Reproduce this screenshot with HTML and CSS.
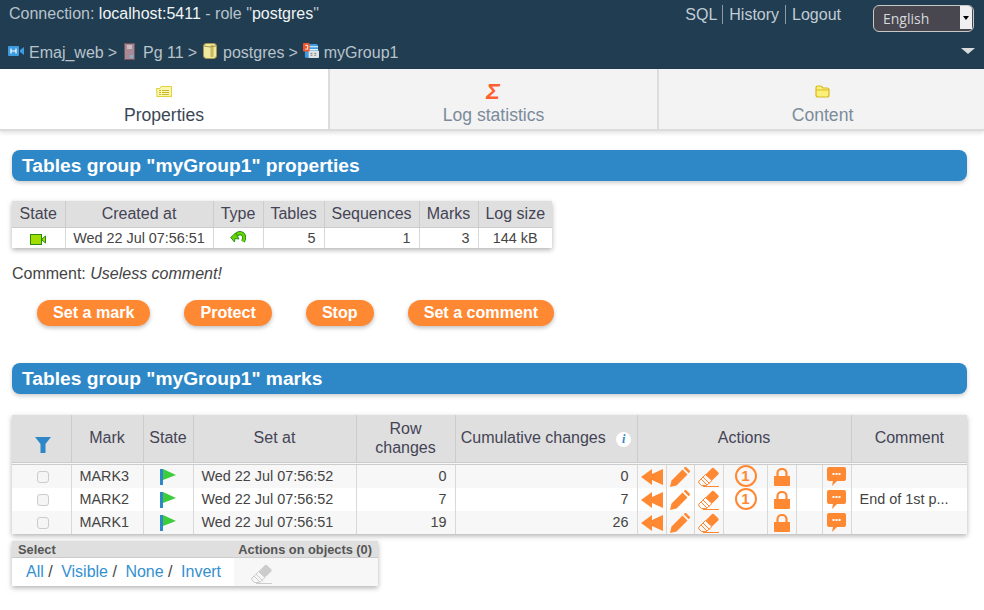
FILE: index.html
```html
<!DOCTYPE html>
<html lang="en">
<head>
  <meta charset="UTF-8">
  <title>Emaj_web - myGroup1</title>
  <link rel="stylesheet" href="styles.css">
</head>
<body>
  <svg class="defs" width="0" height="0">
    <symbol id="rewind" viewBox="0 0 22 16"><path d="M0 8 11 0v5L22 0v16L11 11v5z" fill="currentColor"/></symbol>
    <symbol id="pencil" viewBox="0 0 20 20"><path d="M0 20 1.500 13.500 12.500 2.500 17.500 7.500 6.500 18.500zM13.700 1.300 15 0q.7-.4 1.300.2l3.500 3.500q.5.6 0 1.200L18.700 6.300z" fill="currentColor"/></symbol>
    <symbol id="eraser" viewBox="0 0 21 20">
      <path d="M7.500 7.500 13.500 1.500q1.400-1.400 2.800 0l3.700 3.500q1.300 1.400 0 2.800L14 13.500z" fill="currentColor"/>
      <path d="M7.500 7.500 1 14q-1 1 0 2l2.500 2.500h5l5.500-5zM5 10 11.500 16.500M3 12l6 6M5 19.500h16" fill="none" stroke="currentColor"/>
    </symbol>
    <symbol id="lock" viewBox="0 0 16 18"><path d="M0 8h16v9q0 1-1 1H1q-1 0-1-1z" fill="currentColor"/><path d="M3.500 8V5a4.500 4 0 0 1 9 0v3" fill="none" stroke="currentColor" stroke-width="2.200"/></symbol>
    <symbol id="bubble" viewBox="0 0 19 19"><path d="M2 0h15q2 0 2 2v10q0 2-2 2h-7l-5 5 1-5H2q-2 0-2-2V2q0-2 2-2z" fill="currentColor"/><path d="M5.500 6h2v2h-2zM8.500 6h2v2h-2zM11.500 6h2v2h-2z" fill="#fff"/></symbol>
    <symbol id="flag" viewBox="0 0 16 16"><path d="M0 0h3v16H0z" fill="#2e88c8"/><path d="M3 0l13 6-13 5z" fill="#3ccc3c"/></symbol>
  </svg>

  <header class="topbar">
    <div class="topbar-row">
      <div class="connection">Connection: <span class="bright">localhost:5411</span> - role "<span class="bright">postgres</span>"</div>
      <nav class="toplinks"><a>SQL</a><a>History</a><a>Logout</a></nav>
      <div class="lang">
        <span>English</span>
        <span class="lang-btn"></span>
      </div>
    </div>
    <div class="trail">
      <svg class="crumb" width="16" height="12" viewBox="0 0 16 12"><rect y="1" width="11" height="10" rx="1" fill="#3d9be0"/><path d="M12 5l4-3v8l-4-3z" fill="#3d9be0"/><path d="M3 3.500v5M8 3.500v5M3 6h5" stroke="#fff" stroke-width="1.200"/></svg>
      <a>Emaj_web</a><span class="sep">&gt;</span>
      <svg class="crumb crumb-pg" width="11" height="17" viewBox="0 0 11 17"><rect x=".5" y=".5" width="10" height="16" fill="#a88a96" stroke="#6e5560"/><path d="M3 3h5M3 5h5" stroke="#eee"/><rect x="6" y="12" width="3" height="3" fill="#7fb2c8"/></svg>
      <a>Pg 11</a><span class="sep">&gt;</span>
      <svg class="crumb crumb-db" width="14" height="16" viewBox="0 0 14 16"><rect x=".5" y=".5" width="13" height="15" rx="3" fill="#f0e9a0" stroke="#a8964c"/><path d="M9 2v12" stroke="#c8b860" stroke-width="3"/><path d="M1 3q6 2 12 0" fill="none" stroke="#a8964c"/></svg>
      <a>postgres</a><span class="sep">&gt;</span>
      <svg class="crumb crumb-grp" width="16" height="16" viewBox="0 0 17 17"><rect x="2" y="1" width="14" height="15" rx="2" fill="#3d9be0"/><path d="M2 4h14M2 7h14" stroke="#fff"/><rect x="6" y="8" width="11" height="8" rx="1" fill="#dfe3e6"/><path d="M8 11h2M12 11h2M8 13h2M12 13h2" stroke="#777"/><rect width="7" height="9" rx="1" fill="#f0562a"/><path d="M2.500 2.500h2.500v4H2.500" fill="none" stroke="#fff"/></svg>
      <a>myGroup1</a>
      <span class="bottom-arrow"></span>
    </div>
  </header>

  <nav class="tabs">
    <a class="tab active">
      <svg width="16" height="13" viewBox="0 0 16 13"><path d="M.5 3.500 4 3.500 5 1.500H15.500V12L14 11l-1 1-1-1-1 1-1-1-1 1-1-1-1 1-1-1-1 1-1-1-1 1-1-1-1 1z" fill="#fbf6b0" stroke="#e3d23c"/><path d="M3 5.500h2M6 5.500h7M3 7.500h2M6 7.500h7M3 9.500h2M6 9.500h7" stroke="#c8b830"/></svg>
      <span>Properties</span>
    </a>
    <a class="tab">
      <svg class="sigma" width="15" height="16" viewBox="0 0 15 16"><text x="7" y="15" text-anchor="middle">Σ</text></svg>
      <span>Log statistics</span>
    </a>
    <a class="tab">
      <svg width="15" height="13" viewBox="0 0 15 13"><path d="M1 3q0-2 2-2h3l2 2h4q2 0 2 2v5q0 2-2 2H3q-2 0-2-2z" fill="#fbf07a" stroke="#d8b820" stroke-width="1.200"/><path d="M1.500 5h12" stroke="#d8b820"/></svg>
      <span>Content</span>
    </a>
  </nav>

  <main class="content">
    <h2 class="section-title">Tables group "myGroup1" properties</h2>

    <table class="data props">
      <colgroup>
        <col class="p1"><col class="p2"><col class="p3"><col class="p4"><col class="p5"><col class="p6"><col class="p7">
      </colgroup>
      <thead>
        <tr><th>State</th><th>Created at</th><th>Type</th><th>Tables</th><th>Sequences</th><th>Marks</th><th>Log size</th></tr>
      </thead>
      <tbody>
        <tr>
          <td class="center"><svg class="icon" width="16" height="11" viewBox="0 0 16 11"><rect x=".5" y=".5" width="11" height="10" fill="#9ede00" stroke="#2c8a10"/><path d="M12 5l3.500-3v7L12 6z" fill="#9ede00" stroke="#2c8a10"/></svg></td>
          <td class="center">Wed 22 Jul 07:56:51</td>
          <td class="center"><svg class="icon icon-type" width="16" height="12" viewBox="0 0 16 12"><path d="M6 4.500Q9 .5 12.500 3 15.500 5.500 13 10.500" fill="none" stroke="#1f8a10" stroke-width="4"/><path d="M6 4.500Q9 .5 12.500 3 15.500 5.500 13 10.500" fill="none" stroke="#66d400" stroke-width="2.400"/><path d="M.7 6.500 5.500 2 9 8 5 7.500 4.500 11z" fill="#66d400" stroke="#1f8a10" stroke-width=".9"/></svg></td>
          <td class="right">5</td>
          <td class="right">1</td>
          <td class="right">3</td>
          <td class="center">144 kB</td>
        </tr>
      </tbody>
    </table>

    <p class="comment">Comment: <em>Useless comment!</em></p>

    <div class="actions">
      <button class="pill">Set a mark</button>
      <button class="pill">Protect</button>
      <button class="pill">Stop</button>
      <button class="pill">Set a comment</button>
    </div>

    <h2 class="section-title marks-title">Tables group "myGroup1" marks</h2>

    <table class="data marks">
      <colgroup>
        <col class="m1"><col class="m2"><col class="m3"><col class="m4"><col class="m5"><col class="m6">
        <col class="a1"><col class="a2"><col class="a3"><col class="a4"><col class="a5"><col class="a6"><col class="a7">
        <col class="m7">
      </colgroup>
      <thead>
        <tr>
          <th><svg class="funnel" width="16" height="16" viewBox="0 0 16 16"><path d="M0 0h16L10.500 7v9h-5V7z" fill="#2e88c8"/></svg></th>
          <th>Mark</th>
          <th>State</th>
          <th>Set at</th>
          <th>Row<br>changes</th>
          <th>Cumulative changes <span class="info">i</span></th>
          <th colspan="7">Actions</th>
          <th>Comment</th>
        </tr>
      </thead>
      <tbody>
        <tr>
          <td class="center"><span class="check"></span></td>
          <td class="pad">MARK3</td>
          <td class="center"><svg class="icon" width="16" height="16"><use href="#flag"/></svg></td>
          <td class="pad">Wed 22 Jul 07:56:52</td>
          <td class="right">0</td>
          <td class="right">0</td>
          <td class="act"><svg width="22" height="16"><use href="#rewind"/></svg></td>
          <td class="act"><svg width="20" height="20"><use href="#pencil"/></svg></td>
          <td class="act"><svg width="21" height="20"><use href="#eraser"/></svg></td>
          <td class="act"><span class="one">1</span></td>
          <td class="act"><svg width="16" height="18"><use href="#lock"/></svg></td>
          <td class="act"></td>
          <td class="act"><svg width="19" height="19"><use href="#bubble"/></svg></td>
          <td class="pad"></td>
        </tr>
        <tr>
          <td class="center"><span class="check"></span></td>
          <td class="pad">MARK2</td>
          <td class="center"><svg class="icon" width="16" height="16"><use href="#flag"/></svg></td>
          <td class="pad">Wed 22 Jul 07:56:52</td>
          <td class="right">7</td>
          <td class="right">7</td>
          <td class="act"><svg width="22" height="16"><use href="#rewind"/></svg></td>
          <td class="act"><svg width="20" height="20"><use href="#pencil"/></svg></td>
          <td class="act"><svg width="21" height="20"><use href="#eraser"/></svg></td>
          <td class="act"><span class="one">1</span></td>
          <td class="act"><svg width="16" height="18"><use href="#lock"/></svg></td>
          <td class="act"></td>
          <td class="act"><svg width="19" height="19"><use href="#bubble"/></svg></td>
          <td class="pad">End of 1st p...</td>
        </tr>
        <tr>
          <td class="center"><span class="check"></span></td>
          <td class="pad">MARK1</td>
          <td class="center"><svg class="icon" width="16" height="16"><use href="#flag"/></svg></td>
          <td class="pad">Wed 22 Jul 07:56:51</td>
          <td class="right">19</td>
          <td class="right">26</td>
          <td class="act"><svg width="22" height="16"><use href="#rewind"/></svg></td>
          <td class="act"><svg width="20" height="20"><use href="#pencil"/></svg></td>
          <td class="act"><svg width="21" height="20"><use href="#eraser"/></svg></td>
          <td class="act"></td>
          <td class="act"><svg width="16" height="18"><use href="#lock"/></svg></td>
          <td class="act"></td>
          <td class="act"><svg width="19" height="19"><use href="#bubble"/></svg></td>
          <td class="pad"></td>
        </tr>
      </tbody>
    </table>

    <div class="multi">
      <div class="multi-head"><span>Select</span><span>Actions on objects (0)</span></div>
      <div class="multi-body">
        <div class="multi-links"><a>All</a> /<a>Visible</a> /<a>None</a> /<a>Invert</a></div>
        <div class="multi-act"><svg width="21" height="20"><use href="#eraser"/></svg></div>
      </div>
    </div>
  </main>
</body>
</html>
```

FILE: styles.css
```css
html, body {
  margin: 0;
  padding: 0;
}
body {
  font-family: "Liberation Sans", Arial, sans-serif;
  font-size: 16px;
  color: #444;
  background-color: #fff;
  height: 610px;
  overflow: hidden;
}
.defs {
  display: block;
  height: 0;
}
.topbar {
  height: 69px;
  background-color: #203d52;
  color: #b9c3ca;
  box-sizing: border-box;
}
.topbar-row {
  display: flex;
  height: 38px;
}
.connection {
  padding: 5px 0 0 9px;
  flex: 1;
}
.bright {
  color: #f2f4f5;
}
.toplinks {
  display: flex;
  align-items: flex-start;
  margin-top: 5px;
  height: 19px;
  color: #c3ccd3;
}
.toplinks a {
  padding: 0 6px;
  border-left: 1px solid #8d9aa3;
  line-height: 19px;
}
.toplinks a:first-child {
  border-left: none;
  padding-right: 5px;
}
.lang {
  position: relative;
  width: 101px;
  height: 27px;
  margin: 5px 10px 0 26px;
  box-sizing: border-box;
  border: 1px solid #c8c8c8;
  border-radius: 6px;
  background-color: #48464f;
  color: #d6dade;
  font-family: "Open Sans", sans-serif;
  font-size: 14px;
  line-height: 25px;
  padding-left: 9px;
}
.lang-btn {
  position: absolute;
  right: 1px;
  top: 0;
  bottom: 2px;
  width: 12px;
  background-color: #f0f0f0;
  border-radius: 0 4px 0 0;
}
.lang-btn::after {
  content: "";
  position: absolute;
  top: 10px;
  left: 3px;
  border-left: 3px solid transparent;
  border-right: 3px solid transparent;
  border-top: 4px solid #000;
}
.trail {
  position: relative;
  display: flex;
  align-items: center;
  height: 31px;
  padding: 0 0 2px 8px;
  box-sizing: border-box;
  color: #b9c3ca;
}
.trail a {
  margin-left: 5px;
}
.sep {
  margin: 0 4px;
}
.crumb {
  flex: none;
  margin-top: -4px;
}
.crumb-pg {
  margin: -3px 3px 0 3px;
}
.crumb-db {
  margin-left: 2px;
  margin-right: 1px;
}
.crumb-grp {
  margin-left: 1px;
}
.bottom-arrow {
  position: absolute;
  right: 9px;
  top: 10px;
  border-left: 7px solid transparent;
  border-right: 7px solid transparent;
  border-top: 6px solid #d8dcdf;
}
.tabs {
  display: grid;
  grid-template-columns: 330px 329px 1fr;
  height: 60px;
  background-color: #f3f3f3;
  border-bottom: 2px solid #dcdcdc;
  box-shadow: 0 2px 4px rgba(0,0,0,.12);
}
.tab {
  display: flex;
  flex-direction: column;
  align-items: center;
  color: #7b8b9c;
  font-size: 17.600px;
  border-right: 2px solid #dcdcdc;
  padding-top: 16px;
  box-sizing: border-box;
}
.tab:last-child {
  border-right: none;
  padding-left: 2px;
}
.tab svg {
  height: 13px;
  margin-bottom: 7px;
}
.tab span {
  line-height: 20px;
}
.tab.active {
  background-color: #fff;
  color: #3b4756;
}
.tab .sigma {
  height: 16px;
  margin: -1px 0 5px;
  overflow: visible;
}
.sigma text {
  fill: #ff6030;
  font-weight: bold;
  font-style: italic;
  font-size: 23px;
}
.content {
  padding: 19px 17px 0 12px;
}
.section-title {
  margin: 0;
  height: 31px;
  line-height: 31px;
  padding-left: 10px;
  color: #fff;
  background-color: #2e88c8;
  border-radius: 8px;
  font-size: 19.200px;
  font-weight: bold;
  box-shadow: 0 2px 4px rgba(0,0,0,.2);
}
.marks-title {
  margin-top: 37px;
}
.data {
  border-collapse: collapse;
  table-layout: fixed;
  box-shadow: 0 2px 5px rgba(0,0,0,.3);
  background-color: #fff;
}
.data th {
  background-color: #dfdfdf;
  color: #445;
  font-weight: normal;
  border-left: 1px solid #ccc;
  border-right: 1px solid #ccc;
  padding: 0;
  font-size: 16px;
}
.data td {
  border-left: 1px solid #d8d8d8;
  border-right: 1px solid #d8d8d8;
  padding: 0;
  font-size: 14.400px;
  color: #444;
}
.data th:first-child,
.data td:first-child {
  border-left: none;
}
.data th:last-child,
.data td:last-child {
  border-right: none;
}
.center {
  text-align: center;
}
.right {
  text-align: right;
  padding-right: 8px !important;
}
.pad {
  padding-left: 8px !important;
}
.icon {
  vertical-align: middle;
}
.icon-type {
  margin-top: -5px;
}
.props {
  margin-top: 20px;
  width: 540px;
}
.props th {
  height: 26px;
  border-bottom: 1px solid #ccc;
}
.props td {
  height: 20px;
}
.p1 { width: 53px; }
.p2 { width: 148px; }
.p3 { width: 50px; }
.p4 { width: 61px; }
.p5 { width: 95px; }
.p6 { width: 59px; }
.p7 { width: 74px; }
.comment {
  margin: 17px 0 0;
  font-size: 16px;
  line-height: 18px;
  color: #444;
}
.actions {
  display: flex;
  gap: 34px;
  margin: 17px 0 0 25px;
}
.pill {
  height: 26px;
  padding: 0 16px 2px;
  border: none;
  border-radius: 13px;
  background-color: #ff8833;
  color: #fff;
  font-family: inherit;
  font-size: 16.100px;
  font-weight: bold;
  box-shadow: 0 2px 4px rgba(0,0,0,.25);
}
.marks {
  margin-top: 21px;
  width: 955px;
}
.marks th {
  height: 48px;
  line-height: 19px;
  padding-bottom: 1px;
  border-bottom: 3px double #ccc;
  box-sizing: border-box;
}
.marks td {
  height: 23px;
  line-height: 16px;
}
.marks tbody tr:nth-child(odd) td {
  background-color: #f7f7f7;
}
.marks tbody tr:nth-child(even) td {
  background-color: #fff;
}
.m1 { width: 59px; }
.m2 { width: 72px; }
.m3 { width: 50px; }
.m4 { width: 163px; }
.m5 { width: 99px; }
.m6 { width: 182px; }
.a1 { width: 29px; }
.a2 { width: 28px; }
.a3 { width: 29px; }
.a4 { width: 44px; }
.a5 { width: 29px; }
.a6 { width: 26px; }
.a7 { width: 29px; }
.m7 { width: 116px; }
.funnel {
  vertical-align: middle;
  margin: 14px 0 0 3px;
}
.info {
  display: inline-block;
  width: 15px;
  height: 15px;
  margin-left: 6px;
  border-radius: 50%;
  background-color: #fff;
  color: #2e88c8;
  font-family: "Liberation Serif", serif;
  font-style: italic;
  font-weight: bold;
  font-size: 12px;
  line-height: 15px;
  text-align: center;
  vertical-align: middle;
}
.data .act {
  text-align: center;
  color: #ff8833;
  line-height: 0;
}
.act svg {
  vertical-align: middle;
  margin-top: 1px;
}
.one {
  display: inline-block;
  width: 18px;
  height: 18px;
  margin-left: 1px;
  border: 2px solid #ff8833;
  border-radius: 50%;
  font-size: 15px;
  font-weight: bold;
  line-height: 18px;
  color: #ff8833;
  vertical-align: middle;
}
.check {
  display: inline-block;
  width: 10px;
  height: 10px;
  margin-left: 3px;
  border: 1px solid #ccc;
  border-radius: 3px;
  background-color: #f5f5f5;
  vertical-align: middle;
}
.multi {
  width: 366px;
  margin-top: 7px;
  box-shadow: 0 2px 5px rgba(0,0,0,.3);
  background-color: #fff;
}
.multi-head {
  display: flex;
  justify-content: space-between;
  height: 16px;
  padding: 0 6px;
  background-color: #dfdfdf;
  border-bottom: 1px solid #ccc;
  font-size: 12.800px;
  font-weight: bold;
  line-height: 17px;
  color: #555;
}
.multi-body {
  display: flex;
  height: 28px;
}
.multi-links {
  width: 222px;
  padding-left: 14px;
  box-sizing: border-box;
  line-height: 27px;
  color: #444;
}
.multi-links a {
  color: #3490d0;
  margin-left: 8.500px;
}
.multi-links a:first-child {
  margin-left: 0;
}
.multi-act {
  flex: 1;
  background-color: #f7f7f7;
  padding: 6px 0 0 17px;
  color: #ccc;
}
```
